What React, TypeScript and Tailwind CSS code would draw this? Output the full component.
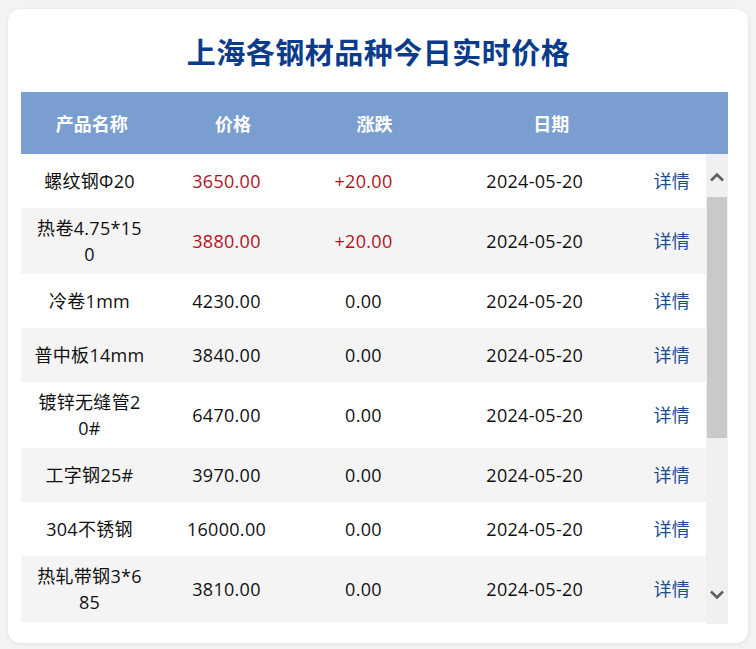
import React from 'react';

type Row = {
  name: string;
  price: string;
  change: string;
  date: string;
  up?: boolean;
};

const rows: Row[] = [
  { name: '螺纹钢Φ20', price: '3650.00', change: '+20.00', date: '2024-05-20', up: true },
  { name: '热卷4.75*150', price: '3880.00', change: '+20.00', date: '2024-05-20', up: true },
  { name: '冷卷1mm', price: '4230.00', change: '0.00', date: '2024-05-20' },
  { name: '普中板14mm', price: '3840.00', change: '0.00', date: '2024-05-20' },
  { name: '镀锌无缝管20#', price: '6470.00', change: '0.00', date: '2024-05-20' },
  { name: '工字钢25#', price: '3970.00', change: '0.00', date: '2024-05-20' },
  { name: '304不锈钢', price: '16000.00', change: '0.00', date: '2024-05-20' },
  { name: '热轧带钢3*685', price: '3810.00', change: '0.00', date: '2024-05-20' },
];

const Chevron: React.FC<{ down?: boolean }> = ({ down }) => (
  <svg width="16" height="10" viewBox="0 0 16 10" className={down ? 'rotate-180' : ''}>
    <polyline points="2,8.5 8,2.5 14,8.5" fill="none" stroke="#5f5f5f" strokeWidth="2.6" />
  </svg>
);

export default function App() {
  return (
    <div
      className="min-h-screen bg-[#f3f3f3] pt-[9px] px-[8px]"
      style={{ fontFamily: '"Open Sans", "Noto Sans CJK SC", sans-serif' }}
    >
      <div className="bg-white rounded-[12px] shadow-[0_1px_4px_rgba(0,0,0,0.08)] h-[634px] pl-[13px] pr-[20px]">
        {/* Title */}
        <h1
          className="h-[83px] flex items-center justify-center pt-[2px] pl-[8px] text-[29px] font-bold text-[#0b3c8c] tracking-[0.5px]"
          style={{ fontFamily: '"Noto Sans CJK SC", sans-serif' }}
        >
          上海各钢材品种今日实时价格
        </h1>

        {/* Header */}
        <div
          className="grid grid-cols-[20%_20%_20%_30%_10%] h-[62px] items-center bg-[#7b9ed0] text-white text-[18px] font-bold text-center"
          style={{ fontFamily: '"Noto Sans CJK SC", sans-serif' }}
        >
          <div>产品名称</div>
          <div>价格</div>
          <div>涨跌</div>
          <div>日期</div>
          <div></div>
        </div>

        {/* Body */}
        <div className="flex h-[470px]">
          <div className="w-[687px] overflow-hidden">
            <table className="w-full table-fixed border-collapse text-[18px] tracking-[0.3px] text-[#111]">
              <colgroup>
                <col className="w-[20%]" />
                <col className="w-[20%]" />
                <col className="w-[20%]" />
                <col className="w-[30%]" />
                <col className="w-[10%]" />
              </colgroup>
              <tbody>
                {rows.map((r, i) => (
                  <tr key={r.name} className={i % 2 === 1 ? 'bg-[#f4f4f4]' : 'bg-white'}>
                    <td className="h-[54px] py-[7px] px-[13px] text-center leading-[26px] break-all">{r.name}</td>
                    <td className={`text-center leading-[26px] ${r.up ? 'text-[#b3111d]' : ''}`}>{r.price}</td>
                    <td className={`text-center leading-[26px] ${r.up ? 'text-[#b3111d]' : ''}`}>{r.change}</td>
                    <td className="text-center leading-[26px]">{r.date}</td>
                    <td className="text-center leading-[26px] text-[#1b4d92]">详情</td>
                  </tr>
                ))}
              </tbody>
            </table>
          </div>

          {/* Scrollbar */}
          <div className="w-[22px] bg-[#f0f0f0] flex flex-col">
            <div className="h-[43px] flex items-center justify-center pt-[2px]">
              <Chevron />
            </div>
            <div className="h-[241px] mx-[1px] bg-[#c9c9c9]" />
            <div className="flex-1" />
            <div className="h-[43px] flex items-center justify-center pb-[16px]">
              <Chevron down />
            </div>
          </div>
        </div>
      </div>
    </div>
  );
}
